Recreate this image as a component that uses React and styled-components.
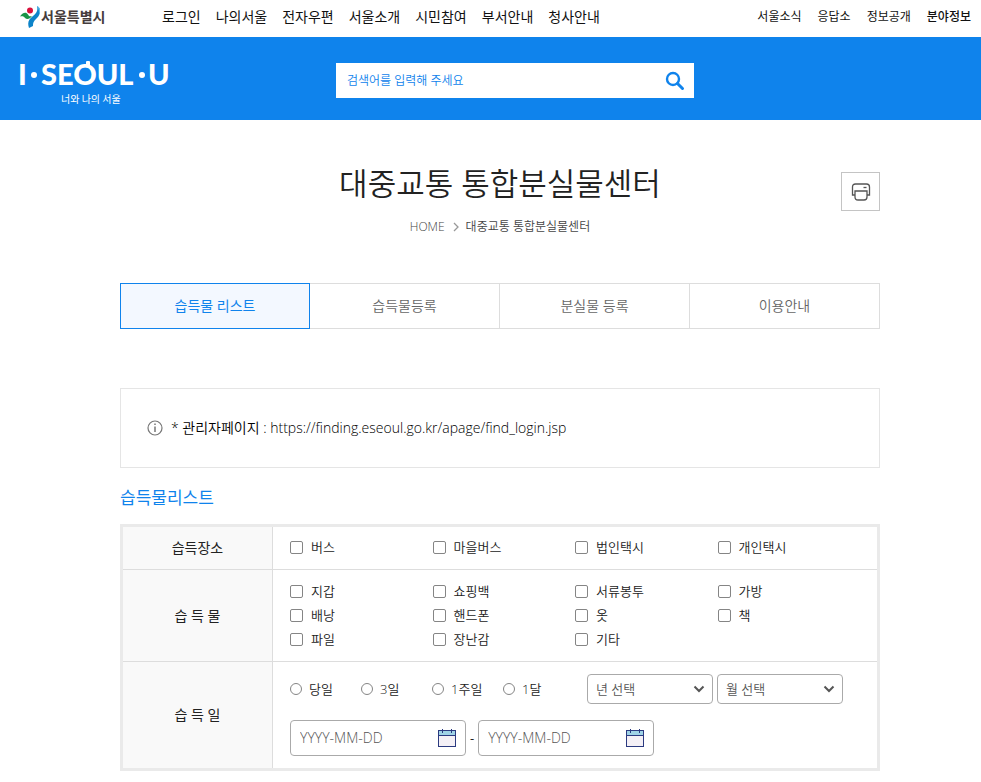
import React from 'react';
import styled, { createGlobalStyle } from 'styled-components';

const BLUE = '#0f83ec';

const GlobalStyle = createGlobalStyle`
  *, *::before, *::after { box-sizing: border-box; }
  body {
    margin: 0;
    background: #fff;
    color: #222;
    font-family: "Open Sans", "Noto Sans CJK KR", sans-serif;
    font-size: 13px;
    line-height: 20px;
  }
  h1, h2, p, ul, ol { margin: 0; padding: 0; }
  ul, ol { list-style: none; }
  a { color: inherit; text-decoration: none; }
  input, select, button { font: inherit; color: inherit; margin: 0; }
`;

const TopBar = styled.div`
  display: flex;
  align-items: center;
  height: 37px;
  padding: 0 10px 3px 20px;
  white-space: nowrap;
`;

const CityLogo = styled.a`
  display: flex;
  align-items: center;
  gap: 1px;
  width: 142px;
  color: #453c3c;
  font-size: 14px;
  font-weight: 700;
`;

const MainMenu = styled.ul`
  display: flex;
  gap: 15px;
  flex: 1;
  color: #111;
  font-size: 14px;
`;

const SideMenu = styled.ul`
  display: flex;
  gap: 16px;
  color: #111;
  font-size: 12px;
`;

const MenuLink = styled.a`
  font-weight: ${(p) => (p.$strong ? 500 : 400)};
`;

const Banner = styled.header`
  display: flex;
  align-items: center;
  height: 83px;
  padding: 4px 16px 0;
  background: ${BLUE};
`;

const Brand = styled.a`
  display: flex;
  flex: 0 0 320px;
  color: #fff;
`;

const SearchForm = styled.form`
  display: flex;
  flex: 0 1 358px;
  height: 35px;
  padding-right: 2px;
  background: #fff;
`;

const SearchInput = styled.input`
  flex: 1;
  min-width: 0;
  padding: 0 11px;
  border: 0;
  background: transparent;
  font-size: 12px;
  font-weight: 350;
  &::placeholder { color: ${BLUE}; opacity: 1; }
`;

const IconButton = styled.button`
  display: flex;
  align-items: center;
  justify-content: center;
  width: ${(p) => p.$size}px;
  height: ${(p) => p.$size}px;
  padding: 0;
  border: ${(p) => (p.$outlined ? '1px solid #c4c4c4' : '0')};
  background: transparent;
  cursor: pointer;
`;

const Main = styled.main`
  padding: 41px 101px 11px 120px;
`;

const PageHead = styled.div`
  display: grid;
  grid-template-columns: 39px 1fr 39px;
  padding-bottom: 46px;
`;

const HeadText = styled.div`
  grid-column: 2;
  display: flex;
  flex-direction: column;
  align-items: center;
  gap: 12px;
`;

const PageTitle = styled.h1`
  color: #222;
  font-size: 31px;
  font-weight: 350;
  line-height: 44px;
`;

const Crumbs = styled.ol`
  display: flex;
  align-items: center;
  gap: 7px;
  color: #444;
  font-size: 12px;
  font-weight: 350;
  svg { display: block; }
`;

const PrintSlot = styled.div`
  padding-top: 11px;
`;

const Tabs = styled.nav`
  display: grid;
  grid-template-columns: repeat(4, 1fr);
  height: 46px;
`;

const Tab = styled.a`
  display: flex;
  align-items: center;
  justify-content: center;
  border: 1px solid ${(p) => (p.$active ? BLUE : '#ddd')};
  border-left-width: ${(p) => (p.$active ? 1 : 0)}px;
  background: ${(p) => (p.$active ? '#f3f8ff' : '#fff')};
  color: ${(p) => (p.$active ? BLUE : '#666')};
  font-size: 14px;
  font-weight: ${(p) => (p.$active ? 400 : 350)};
`;

const Notice = styled.p`
  display: flex;
  align-items: center;
  gap: 8px;
  min-height: 80px;
  margin-top: 59px;
  padding: 0 26px;
  border: 1px solid #e5e5e5;
  color: #000;
  font-size: 14px;
  font-weight: 350;
`;

const SectionTitle = styled.h2`
  margin: 17px 0 14px;
  color: ${BLUE};
  font-size: 17px;
  font-weight: 400;
  line-height: 25px;
`;

const FilterTable = styled.table`
  width: 100%;
  border: 3px solid #eaeaea;
  border-spacing: 0;
  table-layout: fixed;
`;

const LabelCol = styled.col`
  width: 150px;
`;

const LabelCell = styled.th`
  padding: 0;
  border-right: 1px solid #ddd;
  border-bottom: ${(p) => (p.$last ? 0 : 1)}px solid #ddd;
  background: #f9f9f9;
  font-size: 14px;
  font-weight: 400;
`;

const FieldCell = styled.td`
  padding: ${(p) => p.$top}px 17px ${(p) => p.$bottom}px;
  border-bottom: ${(p) => (p.$last ? 0 : 1)}px solid #ddd;
`;

const CheckGrid = styled.div`
  display: grid;
  grid-template-columns: repeat(4, 1fr);
`;

const Choice = styled.label`
  display: flex;
  align-items: center;
  gap: ${(p) => (p.$radio ? 7 : 8)}px;
  height: 24px;
  font-weight: 350;
  white-space: nowrap;
`;

const Check = styled.input`
  appearance: none;
  width: 13px;
  height: 13px;
  border: 1px solid #858585;
  border-radius: 2px;
  background: #fff;
  &:checked { background: ${BLUE}; }
`;

const Radio = styled(Check)`
  width: 12px;
  height: 12px;
  border-radius: 50%;
`;

const FieldRow = styled.div`
  display: flex;
  align-items: center;
  gap: 4px;
  & + & { margin-top: 16px; }
`;

const RadioGroup = styled.div`
  display: grid;
  grid-template-columns: repeat(4, 71px);
  width: 293px;
`;

const SelectBox = styled.div`
  display: grid;
  grid-template-columns: 1fr 20px;
  align-items: center;
  width: 126px;
  svg { grid-area: 1 / 2; pointer-events: none; }
`;

const Select = styled.select`
  grid-area: 1 / 1 / 2 / 3;
  appearance: none;
  height: 30px;
  padding: 0 8px;
  border: 1px solid #aaa;
  border-radius: 4px;
  background: #fff;
  color: #555;
  font-weight: 350;
`;

const DateBox = styled.div`
  display: flex;
  align-items: center;
  width: 176px;
  height: 36px;
  padding: 0 6px 0 9px;
  border: 1px solid #aaa;
  border-radius: 4px;
`;

const DateInput = styled.input`
  flex: 1;
  min-width: 0;
  padding: 0;
  border: 0;
  outline: 0;
  font-size: 14px;
  font-weight: 300;
  &::placeholder { color: #555; opacity: 1; }
`;

function CityMark() {
  return (
    <svg width="20" height="22" viewBox="0 0 20 22" aria-hidden="true">
      <path d="M0 10.500C2 7 6 5 8 8.500c1 2 2 2 4 1.500-2 3-5 4-7 2-1-2-3-2-5-1.500z" fill="#199447" />
      <circle cx="10" cy="4.500" r="3" fill="#d9103c" />
      <path d="M17 0c4 2 4 8 0 12-3 3-4 4-4 8l-4 2c-2-6 0-9 4-12 4-3 5-6 4-10z" fill="#0c83c9" />
      <path d="M17 0c4 2 4 5 2 8 0-3 0-5-2-8z" fill="#64bde8" />
    </svg>
  );
}

function BrandMark() {
  return (
    <svg width="160" height="60" viewBox="-4 -8 160 60" fill="#fff" aria-label="I·SEOUL·U 너와 나의 서울">
      <g fontFamily="Lato, sans-serif" fontWeight="900" fontSize="29">
        <text x="-2" y="26">I</text>
        <text x="21" y="26">SEOUL</text>
        <text x="128" y="26">U</text>
      </g>
      <circle cx="14" cy="16" r="3" />
      <circle cx="122" cy="16" r="3" />
      <rect x="66" y="2" width="4" height="5" rx="1" />
      <text x="41" y="44" fontSize="10" fontFamily="Noto Sans CJK KR, sans-serif">너와 나의 서울</text>
    </svg>
  );
}

function SearchIcon() {
  return (
    <svg width="20" height="20" viewBox="0 0 20 20" fill="none" stroke={BLUE} aria-hidden="true">
      <circle cx="8" cy="8" r="6" strokeWidth="2.4" />
      <path d="M12.500 12.500l5 5" strokeWidth="3" strokeLinecap="round" />
    </svg>
  );
}

function PrintIcon() {
  return (
    <svg width="20" height="18" viewBox="0 0 20 18" fill="none" stroke="#555" strokeWidth="1.3" aria-hidden="true">
      <path d="M4 12H1.500V4q0-3 3-3h11q3 0 3 3v8H16" />
      <path d="M4 8h12v6q0 3-3 3H7q-3 0-3-3z" />
      <path d="M12.500 4.500h3" />
    </svg>
  );
}

function InfoIcon() {
  return (
    <svg width="16" height="16" viewBox="0 0 16 16" fill="none" stroke="#777" aria-hidden="true">
      <circle cx="8" cy="8" r="7" strokeWidth="1.200" />
      <path d="M8 6.500v5.500M8 3.500v1.500" strokeWidth="1.500" />
    </svg>
  );
}

function ArrowIcon() {
  return (
    <svg width="12" height="8" viewBox="0 0 12 8" fill="none" stroke="#555" strokeWidth="2" aria-hidden="true">
      <path d="M1.500 1.500L6 6l4.500-4.500" />
    </svg>
  );
}

function CalendarIcon() {
  return (
    <svg width="20" height="20" viewBox="0 0 20 20" aria-hidden="true">
      <rect x="1.500" y="2.500" width="17" height="16" fill="#f4f0f6" stroke="#2b3a80" />
      <path d="M2 3h16v4H2z" fill="#9fd3e6" />
      <path d="M1 7.500h18M1 18.500h18M5.500 1v4M14.500 1v4" stroke="#2b3a80" fill="none" />
    </svg>
  );
}

const mainMenu = ['로그인', '나의서울', '전자우편', '서울소개', '시민참여', '부서안내', '청사안내'];
const sideMenu = ['서울소식', '응답소', '정보공개', '분야정보'];
const tabs = ['습득물 리스트', '습득물등록', '분실물 등록', '이용안내'];
const places = ['버스', '마을버스', '법인택시', '개인택시'];
const items = ['지갑', '쇼핑백', '서류봉투', '가방', '배낭', '핸드폰', '옷', '책', '파일', '장난감', '기타'];
const periods = ['당일', '3일', '1주일', '1달'];

function CheckList({ name, options }) {
  return (
    <CheckGrid>
      {options.map((option) => (
        <Choice key={option}>
          <Check type="checkbox" name={name} value={option} />
          {option}
        </Choice>
      ))}
    </CheckGrid>
  );
}

function Picker({ label }) {
  return (
    <SelectBox>
      <Select aria-label={label} defaultValue="">
        <option value="">{label}</option>
      </Select>
      <ArrowIcon />
    </SelectBox>
  );
}

function DateField({ label }) {
  return (
    <DateBox>
      <DateInput type="text" placeholder="YYYY-MM-DD" aria-label={label} />
      <IconButton type="button" $size={24} aria-label={`${label} 달력`}>
        <CalendarIcon />
      </IconButton>
    </DateBox>
  );
}

export default function App() {
  return (
    <>
      <GlobalStyle />
      <TopBar>
        <CityLogo href="#">
          <CityMark />
          서울특별시
        </CityLogo>
        <MainMenu>
          {mainMenu.map((text) => (
            <li key={text}><MenuLink href="#">{text}</MenuLink></li>
          ))}
        </MainMenu>
        <SideMenu>
          {sideMenu.map((text) => (
            <li key={text}><MenuLink href="#" $strong={text === '분야정보'}>{text}</MenuLink></li>
          ))}
        </SideMenu>
      </TopBar>
      <Banner>
        <Brand href="#"><BrandMark /></Brand>
        <SearchForm role="search">
          <SearchInput type="text" placeholder="검색어를 입력해 주세요" aria-label="검색어" />
          <IconButton type="submit" $size={35} aria-label="검색"><SearchIcon /></IconButton>
        </SearchForm>
      </Banner>
      <Main>
        <PageHead>
          <HeadText>
            <PageTitle>대중교통 통합분실물센터</PageTitle>
            <Crumbs>
              <li><a href="#">HOME</a></li>
              <li aria-hidden="true">
                <svg width="7" height="10" viewBox="0 0 7 10" fill="none" stroke="#999" strokeWidth="1.300">
                  <path d="M2 1l4 4-4 4" />
                </svg>
              </li>
              <li>대중교통 통합분실물센터</li>
            </Crumbs>
          </HeadText>
          <PrintSlot>
            <IconButton type="button" $size={39} $outlined aria-label="인쇄"><PrintIcon /></IconButton>
          </PrintSlot>
        </PageHead>
        <Tabs>
          {tabs.map((text, i) => (
            <Tab key={text} href="#" $active={i === 0}>{text}</Tab>
          ))}
        </Tabs>
        <Notice>
          <InfoIcon />
          <span>* 관리자페이지 : https://finding.eseoul.go.kr/apage/find_login.jsp</span>
        </Notice>
        <SectionTitle>습득물리스트</SectionTitle>
        <FilterTable>
          <colgroup>
            <LabelCol />
            <col />
          </colgroup>
          <tbody>
            <tr>
              <LabelCell scope="row">습득장소</LabelCell>
              <FieldCell $top={8} $bottom={10}><CheckList name="place" options={places} /></FieldCell>
            </tr>
            <tr>
              <LabelCell scope="row">습 득 물</LabelCell>
              <FieldCell $top={9} $bottom={10}><CheckList name="item" options={items} /></FieldCell>
            </tr>
            <tr>
              <LabelCell scope="row" $last>습 득 일</LabelCell>
              <FieldCell $top={12} $bottom={12} $last>
                <FieldRow>
                  <RadioGroup>
                    {periods.map((text) => (
                      <Choice key={text} $radio>
                        <Radio type="radio" name="period" value={text} />
                        {text}
                      </Choice>
                    ))}
                  </RadioGroup>
                  <Picker label="년 선택" />
                  <Picker label="월 선택" />
                </FieldRow>
                <FieldRow>
                  <DateField label="시작일" />
                  -
                  <DateField label="종료일" />
                </FieldRow>
              </FieldCell>
            </tr>
          </tbody>
        </FilterTable>
      </Main>
    </>
  );
}
